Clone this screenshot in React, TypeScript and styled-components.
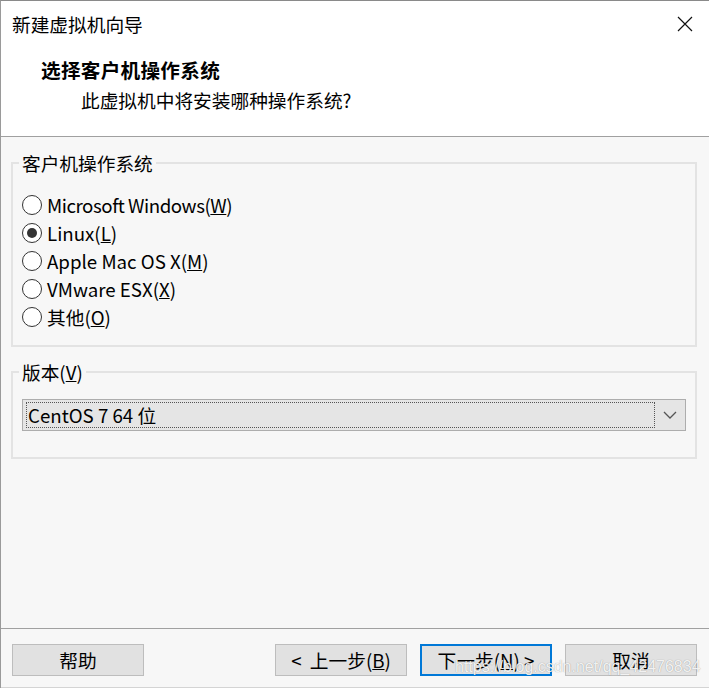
import React from "react";
import styled, { createGlobalStyle } from "styled-components";

const Global = createGlobalStyle`
  html, body { margin: 0; padding: 0; background: #f7f7f7; overflow: hidden; }
  * { box-sizing: border-box; }
`;

const FONT = `"Noto Sans CJK SC", "Noto Sans", sans-serif`;

const Window = styled.div`
  width: 709px;
  height: 688px;
  display: flex;
  flex-direction: column;
  border-left: 1px solid #9a9a9a;
  border-top: 1px solid #8a8a8a;
  font-family: ${FONT};
  font-size: 18.7px;
  color: #000;
  background: #f7f7f7;
`;

const Header = styled.div`
  background: #fff;
  height: 136px;
  border-bottom: 1px solid #a0a0a0;
  display: flex;
  flex-direction: column;
`;

const TitleBar = styled.div`
  height: 46px;
  display: flex;
  align-items: center;
  justify-content: space-between;
  padding: 0 16px 0 11px;
`;

const TitleText = styled.span`
  line-height: 24px;
`;

const CloseIcon = styled.svg`
  width: 16px;
  height: 16px;
  display: block;
`;

const Heading = styled.div`
  padding: 8px 0 0 40px;
  display: flex;
  flex-direction: column;
`;

const HeadingTitle = styled.div`
  font-weight: 700;
  font-size: 19.6px;
  line-height: 30px;
  letter-spacing: 0.3px;
`;

const HeadingSub = styled.div`
  padding-left: 40px;
  line-height: 30px;
`;

const Body = styled.div`
  flex: 1;
  display: flex;
  flex-direction: column;
  padding: 14px 12px 0 10px;
  gap: 13px;
`;

const Group = styled.fieldset<{ $pt: number; $pb: number }>`
  margin: 0;
  border: 2px solid #e3e3e3;
  padding: ${(p) => p.$pt}px 9px ${(p) => p.$pb}px 9px;
  min-width: 0;
`;

const Legend = styled.legend`
  padding: 0 3px;
  margin-left: -3px;
  line-height: 24px;
`;

const RadioRow = styled.label`
  display: flex;
  align-items: center;
  height: 28px;
  gap: 5px;
  line-height: 28px;
`;

const RadioText = styled.span<{ $tight?: boolean }>`
  letter-spacing: ${(p) => (p.$tight ? "-0.45px" : "0")};
`;

const RadioCircle = styled.span<{ $checked?: boolean }>`
  width: 20px;
  height: 20px;
  border-radius: 50%;
  border: 1.5px solid #333;
  background: #fff;
  display: flex;
  align-items: center;
  justify-content: center;
  flex-shrink: 0;
  &::after {
    content: "";
    width: 10px;
    height: 10px;
    border-radius: 50%;
    background: ${(p) => (p.$checked ? "#333" : "transparent")};
  }
`;

const Select = styled.div`
  height: 32px;
  background: #e5e5e5;
  border: 1px solid #adadad;
  display: flex;
  align-items: center;
  padding: 2px 0 2px 3px;
`;

const SelectValue = styled.div`
  flex: 1;
  height: 100%;
  border: 1px dotted #555;
  display: flex;
  align-items: center;
  padding-left: 1px;
  line-height: 24px;
`;

const Chevron = styled.svg`
  width: 30px;
  height: 12px;
  display: block;
  flex-shrink: 0;
`;

const Footer = styled.div`
  position: relative;
  height: 60px;
  border-top: 1px solid #a0a0a0;
  border-bottom: 1px solid #d4d4d4;
  display: flex;
  align-items: flex-start;
  justify-content: space-between;
  padding: 15px 12px 0 11px;
`;

const ButtonGroup = styled.div`
  display: flex;
  gap: 13px;
`;

const Button = styled.button<{ $primary?: boolean }>`
  width: 132px;
  height: 32px;
  background: #e1e1e1;
  border: ${(p) => (p.$primary ? "2px solid #0078d7" : "1.5px solid #bdbdbd")};
  font-family: ${FONT};
  font-size: 18.7px;
  color: #000;
  padding: 0;
  line-height: 28px;
  display: flex;
  align-items: center;
  justify-content: center;
  white-space: pre;
`;

const Watermark = styled.div`
  position: absolute;
  left: 454px;
  top: 29px;
  font-family: "Liberation Sans", Arial, sans-serif;
  font-size: 16px;
  line-height: 18px;
  color: rgba(255, 255, 255, 0.9);
  text-shadow: 0 0 1px rgba(0, 0, 0, 0.4);
  pointer-events: none;
  white-space: nowrap;
`;

const options = [
  { label: "Microsoft Windows", key: "W", tight: true },
  { label: "Linux", key: "L", checked: true },
  { label: "Apple Mac OS X", key: "M" },
  { label: "VMware ESX", key: "X" },
  { label: "其他", key: "O" },
];

export default function App() {
  return (
    <>
      <Global />
      <Window>
        <Header>
          <TitleBar>
            <TitleText>新建虚拟机向导</TitleText>
            <CloseIcon viewBox="0 0 16 16">
              <path d="M1 1 L15 15 M15 1 L1 15" stroke="#111" strokeWidth="1.2" fill="none" />
            </CloseIcon>
          </TitleBar>
          <Heading>
            <HeadingTitle>选择客户机操作系统</HeadingTitle>
            <HeadingSub>此虚拟机中将安装哪种操作系统?</HeadingSub>
          </Heading>
        </Header>
        <Body>
          <Group $pt={16} $pb={14}>
            <Legend>客户机操作系统</Legend>
            {options.map((o) => (
              <RadioRow key={o.key}>
                <RadioCircle $checked={o.checked} />
                <RadioText $tight={o.tight}>
                  {o.label}(<u>{o.key}</u>)
                </RadioText>
              </RadioRow>
            ))}
          </Group>
          <Group $pt={15} $pb={26}>
            <Legend>
              版本(<u>V</u>)
            </Legend>
            <Select>
              <SelectValue>CentOS 7 64 位</SelectValue>
              <Chevron viewBox="0 0 30 12">
                <path d="M9 3 L15 9 L21 3" stroke="#555" strokeWidth="1.3" fill="none" />
              </Chevron>
            </Select>
          </Group>
        </Body>
        <Footer>
          <Button>帮助</Button>
          <ButtonGroup>
            <Button>
              {"<  上一步("}<u>B</u>)
            </Button>
            <Button $primary>
              下一步(<u>N</u>) &gt;
            </Button>
            <Button>取消</Button>
          </ButtonGroup>
          <Watermark>https://blog.csdn.net/qq_42476834</Watermark>
        </Footer>
      </Window>
    </>
  );
}
